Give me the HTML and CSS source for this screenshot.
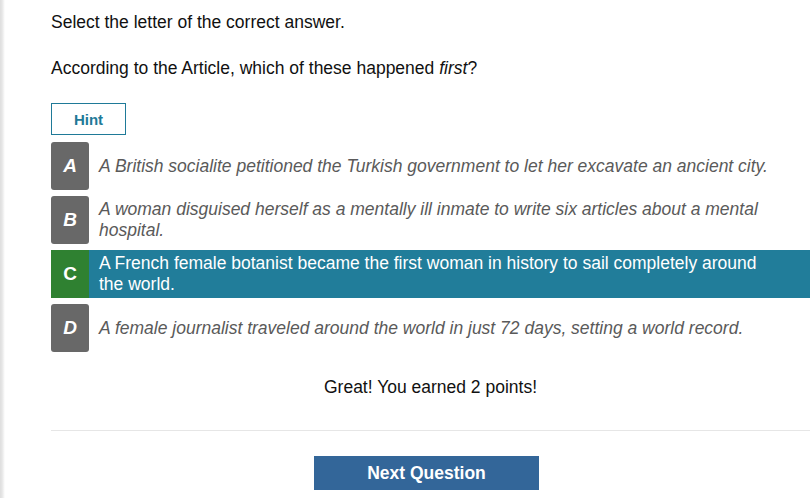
FILE: index.html
```html
<!DOCTYPE html>
<html lang="en">
<head>
<meta charset="utf-8">
<title>Question</title>
<link rel="stylesheet" href="styles.css">
</head>
<body>
<div class="page">
  <div class="content">
    <p class="instruction">Select the letter of the correct answer.</p>
    <p class="question">According to the Article, which of these happened <em>first</em>?</p>
    <button class="hint">Hint</button>
    <ul class="options">
      <li class="option">
        <span class="letter">A</span>
        <span class="text">A British socialite petitioned the Turkish government to let her excavate an ancient city.</span>
      </li>
      <li class="option">
        <span class="letter">B</span>
        <span class="text">A woman disguised herself as a mentally ill inmate to write six articles about a mental hospital.</span>
      </li>
      <li class="option correct">
        <span class="letter">C</span>
        <span class="text">A French female botanist became the first woman in history to sail completely around the world.</span>
      </li>
      <li class="option">
        <span class="letter">D</span>
        <span class="text">A female journalist traveled around the world in just 72 days, setting a world record.</span>
      </li>
    </ul>
    <p class="feedback">Great! You earned 2 points!</p>
    <hr class="divider">
    <div class="actions">
      <button class="next">Next Question</button>
    </div>
  </div>
</div>
</body>
</html>
```

FILE: styles.css
```css
html, body {
  margin: 0;
  padding: 0;
  overflow: hidden;
  background: #fff;
}

body {
  font-family: "Liberation Sans", Arial, sans-serif;
  font-size: 17.5px;
  color: #111;
}

.page {
  min-height: 498px;
  background: linear-gradient(to right, #dedede 0, #e6e6e6 2px, #eeeeee 3px, #f7f7f7 4px, #ffffff 5px);
  padding: 12px 0 0 51px;
  box-sizing: border-box;
}

.content {
  width: 759px;
}

.instruction,
.question {
  margin: 0;
  line-height: 20px;
}

.question {
  margin-top: 26px;
}

.question em {
  font-style: italic;
}

.hint {
  display: block;
  margin-top: 25px;
  width: 75px;
  height: 32px;
  border: 1px solid #1f7a98;
  background: #fff;
  color: #1f7a98;
  font-family: "Liberation Sans", Arial, sans-serif;
  font-weight: bold;
  font-size: 15px;
  padding: 0;
}

.options {
  list-style: none;
  margin: 7px 0 0;
  padding: 0;
  display: flex;
  flex-direction: column;
  gap: 6px;
}

.option {
  display: flex;
  align-items: stretch;
  min-height: 48px;
}

.letter {
  flex: 0 0 38px;
  display: flex;
  align-items: center;
  justify-content: center;
  background: #686868;
  color: #fff;
  font-weight: bold;
  font-style: italic;
  font-size: 19px;
  border-radius: 3px;
}

.text {
  flex: 1;
  display: flex;
  align-items: center;
  padding: 3px 28px 3px 10px;
  font-style: italic;
  color: #5a5a5a;
  line-height: 21px;
}

.option.correct {
  background: #217d9a;
}

.option.correct .letter {
  background: #2f8131;
  font-style: normal;
  border-radius: 0;
}

.option.correct .text {
  color: #fff;
  font-style: normal;
}

.feedback {
  margin: 25px 0 0;
  text-align: center;
  line-height: 20px;
  color: #111;
}

.divider {
  margin: 33px 0 0;
  border: 0;
  border-top: 1px solid #e6e6e6;
  height: 0;
}

.actions {
  display: flex;
  justify-content: center;
  padding-right: 8px;
  margin-top: 25px;
}

.next {
  width: 225px;
  height: 34px;
  border: 0;
  background: #336699;
  color: #fff;
  font-family: "Liberation Sans", Arial, sans-serif;
  font-weight: bold;
  font-size: 17.5px;
  padding: 0;
}
```
